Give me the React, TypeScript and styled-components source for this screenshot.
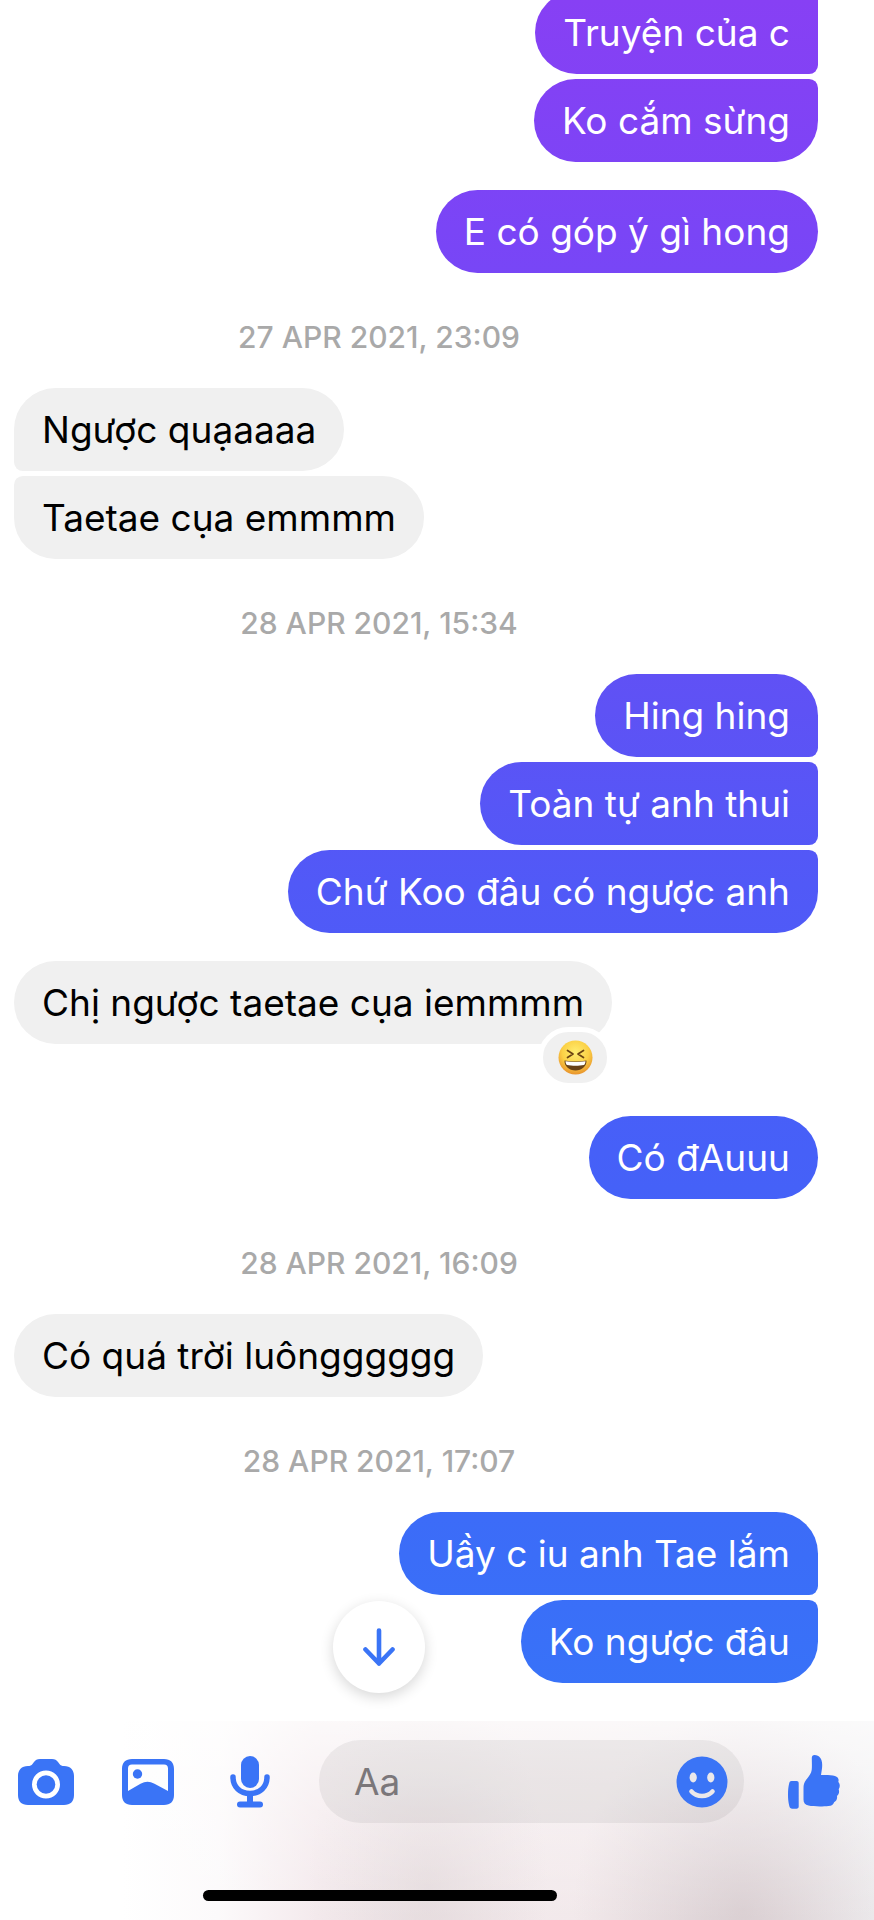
import React from "react";
import styled, { createGlobalStyle, css } from "styled-components";

const accent = "#3a74f6";

const GlobalStyle = createGlobalStyle`
  *, *::before, *::after { box-sizing: border-box; }
  body {
    margin: 0;
    background: #fff;
    color: #000;
    font-family: Inter, "Noto Sans", sans-serif;
  }
`;

const Screen = styled.div`
  display: flex;
  flex-direction: column;
  height: 100vh;
  background: #fff;
`;

const Thread = styled.main`
  flex: 1;
  min-height: 0;
  display: flex;
  flex-direction: column;
  justify-content: flex-end;
  overflow: hidden;
  padding: 0 56px 38px 14px;
`;

const Timestamp = styled.time`
  flex: none;
  display: block;
  padding: 47px 60px 34px 0;
  margin-right: 14px;
  font-size: 30px;
  line-height: 34px;
  font-weight: 500;
  text-align: center;
  text-transform: uppercase;
  color: #a9a9a9;
`;

const Group = styled.section<{ $mine?: boolean; $spaced?: boolean }>`
  flex: none;
  display: flex;
  flex-direction: column;
  align-items: ${(p) => (p.$mine ? "flex-end" : "flex-start")};
  gap: 5px;
  margin-top: ${(p) => (p.$spaced ? "28px" : "0")};
`;

const mineColors = css`
  color: #fff;
  background: linear-gradient(
      180deg,
      #8740f4 0%,
      #7a45f6 12%,
      #5e52f5 37%,
      #5159f7 46%,
      #4660f8 60%,
      #3b6df8 81%,
      #3872f8 88%
    )
    fixed;
`;

const theirColors = css`
  color: #000;
  background: #f0f0f0;
`;

const Bubble = styled.p<{ $mine?: boolean; $joinTop?: boolean; $joinBottom?: boolean }>`
  position: relative;
  margin: 0;
  padding: 18px 28px 17px;
  font-size: 37px;
  line-height: 48px;
  border-radius: 42px;
  ${(p) => (p.$mine ? mineColors : theirColors)}
  ${(p) => p.$joinTop && (p.$mine ? "border-top-right-radius: 9px;" : "border-top-left-radius: 9px;")}
  ${(p) => p.$joinBottom && (p.$mine ? "border-bottom-right-radius: 9px;" : "border-bottom-left-radius: 9px;")}
`;

const ReactedBubble = styled(Bubble)`
  margin-bottom: 44px;
`;

const Reaction = styled.button`
  position: absolute;
  right: 0;
  bottom: -44px;
  display: flex;
  align-items: center;
  justify-content: center;
  width: 74px;
  height: 61px;
  padding: 0;
  border: 5px solid #fff;
  border-radius: 31px;
  background: #f0f0f0;
`;

const Footer = styled.footer`
  position: relative;
  flex: none;
  display: flex;
  flex-direction: column;
  justify-content: space-between;
  padding: 19px 32px 19px 18px;
  height: 199px;
  background:
    linear-gradient(180deg, rgba(255, 255, 255, 0.7) 0%, rgba(255, 255, 255, 0.3) 45%, rgba(255, 255, 255, 0) 100%),
    radial-gradient(170px 200px at 85% 95%, rgba(212, 200, 203, 0.75), rgba(212, 200, 203, 0) 100%),
    radial-gradient(120px 220px at 49% 85%, rgba(222, 212, 214, 0.65), rgba(222, 212, 214, 0) 100%),
    linear-gradient(90deg, #fff 14%, #fcfafb 25%, #f4eaed 36%, #f2e9eb 70%, #ede6e9 85%, #f0eff1 100%);
`;

const ScrollDown = styled.button`
  position: absolute;
  bottom: calc(100% + 28px);
  left: calc(50% - 58px);
  transform: translateX(-50%);
  display: flex;
  align-items: center;
  justify-content: center;
  width: 92px;
  height: 92px;
  padding: 0;
  border: 0;
  border-radius: 50%;
  background: #fff;
  box-shadow: 0 4px 14px rgba(0, 0, 0, 0.16);
`;

const Toolbar = styled.form`
  display: flex;
  align-items: center;
`;

const Tools = styled.div`
  display: flex;
  gap: 46px;
`;

const IconButton = styled.button`
  flex: none;
  display: flex;
  align-items: center;
  justify-content: center;
  width: 56px;
  height: 56px;
  padding: 0;
  border: 0;
  background: none;
  color: ${accent};
`;

const Field = styled.label`
  flex: 1;
  min-width: 0;
  display: flex;
  align-items: center;
  height: 83px;
  margin: 0 42px 0 41px;
  padding: 0 14px 0 35px;
  border-radius: 42px;
  background: rgba(60, 50, 55, 0.07);
`;

const Input = styled.input`
  flex: 1;
  min-width: 0;
  padding: 0;
  border: 0;
  outline: 0;
  background: none;
  font: inherit;
  font-size: 37px;
  line-height: 48px;
  color: #000;
  &::placeholder {
    color: #7b777a;
    opacity: 1;
  }
`;

const HomeIndicator = styled.div`
  align-self: center;
  width: 354px;
  height: 11px;
  margin-right: 100px;
  border-radius: 6px;
  background: #000;
`;

const CameraIcon = () => (
  <svg width="56" height="46" viewBox="0 0 56 46" aria-hidden="true">
    <path
      fill="currentColor"
      fillRule="evenodd"
      d="M22 0h12c3 0 4.500 1 6 3l1.500 2c1 1.500 2.500 2 4.500 2 6.500 0 10 4 10 10v19c0 6.500-3.500 10-10 10H10C3.500 46 0 42.500 0 36V17C0 11 3.500 7 10 7c2 0 3.500-.5 4.500-2L16 3c1.500-2 3-3 6-3Zm6 11.500a14 14 0 1 0 0 28 14 14 0 0 0 0-28Z"
    />
    <circle cx="28" cy="25.500" r="9.300" fill="currentColor" />
  </svg>
);

const PhotoIcon = () => (
  <svg width="52" height="46" viewBox="0 0 52 46" aria-hidden="true">
    <path
      fill="currentColor"
      fillRule="evenodd"
      d="M10 0h32c6.500 0 10 3.500 10 10v26c0 6.500-3.500 10-10 10H10C3.500 46 0 42.500 0 36V10C0 3.500 3.500 0 10 0Zm0 5.500C7.300 5.500 6 6.800 6 9.500V32l12.500-7.200c5-2.800 9-2.800 14 0L46 32V9.500c0-2.700-1.300-4-4-4H10Z"
    />
    <circle cx="15.500" cy="15" r="4.700" fill="currentColor" />
  </svg>
);

const MicIcon = () => (
  <svg width="40" height="52" viewBox="0 0 40 52" aria-hidden="true">
    <rect x="11" y="0" width="18" height="32" rx="9" fill="currentColor" />
    <path d="M3 21c0 10 7 16.500 17 16.500S37 31 37 21" fill="none" stroke="currentColor" strokeWidth="5.500" strokeLinecap="round" />
    <path d="M20 38v9" stroke="currentColor" strokeWidth="6" />
    <rect x="7" y="45.500" width="26" height="6" rx="3" fill="currentColor" />
  </svg>
);

const SmileIcon = () => (
  <svg width="52" height="52" viewBox="0 0 52 52" aria-hidden="true">
    <circle cx="26" cy="26" r="25.500" fill="currentColor" />
    <ellipse cx="17.200" cy="21.500" rx="3.600" ry="4.900" fill="#ebe8ea" />
    <ellipse cx="34.800" cy="21.500" rx="3.600" ry="4.900" fill="#ebe8ea" />
    <path d="M15.500 35.500c5.500 6 15.500 6 21 0" fill="none" stroke="#ebe8ea" strokeWidth="4.600" strokeLinecap="round" />
  </svg>
);

const ThumbIcon = () => (
  <svg width="52" height="54" viewBox="0 0 52 54" aria-hidden="true">
    <path
      fill="currentColor"
      d="M3.500 26h5c1.400 0 2.200.8 2.200 2.200v23.300c0 1.400-.8 2.200-2.200 2.200H4.300c-1.600 0-2.600-.9-3-2.700C.3 47 0 43.500 0 39.500c0-4 .3-7.500 1.200-11.200.4-1.600 1-2.300 2.300-2.300Z"
    />
    <path
      fill="currentColor"
      d="M23.800 3c0-2 1-3 2.700-3 4.800 0 7.700 3.800 7.700 10 0 3.300-.6 6-1.200 10 5.500-.3 10.500 0 14 1 3 .9 4.200 3.200 3.300 6 1.900 2 1.900 5 .4 7.200.9 2.700.2 5.200-1.700 6.800.5 2.800-.6 5-2.900 6.200-.7 2.400-2.500 3.600-5.600 3.900-6 .6-15 .6-20-.5-3.500-.8-5-2.600-5-6V33c0-3.500.6-5.500 2.700-8.300 2.800-3.700 5.100-6 5.500-9.700.4-4 .100-8 .100-12Z"
    />
  </svg>
);

const ArrowDownIcon = () => (
  <svg width="34" height="38" viewBox="0 0 34 38" fill="none" stroke={accent} strokeWidth="4.600" strokeLinecap="round" strokeLinejoin="round" aria-hidden="true">
    <path d="M17 2.500v33M3.500 21.500 17 35.500l13.500-14" />
  </svg>
);

const LaughIcon = () => (
  <svg width="35" height="35" viewBox="0 0 35 35" aria-hidden="true">
    <defs>
      <radialGradient id="laugh-face" cx="50%" cy="35%" r="65%">
        <stop offset="0" stopColor="#ffee70" />
        <stop offset="0.600" stopColor="#fbd045" />
        <stop offset="1" stopColor="#e8932c" />
      </radialGradient>
    </defs>
    <circle cx="17.500" cy="17.500" r="17" fill="url(#laugh-face)" />
    <path d="M9.500 10.500 15 14l-5.500 3.500M25.500 10.500 20 14l5.500 3.500" fill="none" stroke="#6b4312" strokeWidth="1.700" strokeLinecap="round" strokeLinejoin="round" />
    <path d="M6.500 20.500c7 1.200 15 1.200 22 0 .3 5.500-4.500 10-11 10s-11.300-4.500-11-10Z" fill="#694216" />
    <path d="M7.500 21.300c6.500 1 13.500 1 20 0-.1 1.800-.7 3.200-1.500 3.700-5 .9-12 .9-17 0-.8-.5-1.400-1.900-1.500-3.700Z" fill="#fff" />
  </svg>
);

export default function App() {
  return (
    <>
      <GlobalStyle />
      <Screen>
        <Thread>
          <Group $mine>
            <Bubble $mine $joinTop $joinBottom>Truyện của c</Bubble>
            <Bubble $mine $joinTop>Ko cắm sừng</Bubble>
          </Group>
          <Group $mine $spaced>
            <Bubble $mine>E có góp ý gì hong</Bubble>
          </Group>
          <Timestamp dateTime="2021-04-27T23:09">27 Apr 2021, 23:09</Timestamp>
          <Group>
            <Bubble $joinBottom>Ngược quạaaaa</Bubble>
            <Bubble $joinTop>Taetae cụa emmmm</Bubble>
          </Group>
          <Timestamp dateTime="2021-04-28T15:34">28 Apr 2021, 15:34</Timestamp>
          <Group $mine>
            <Bubble $mine $joinBottom>Hing hing</Bubble>
            <Bubble $mine $joinTop $joinBottom>Toàn tự anh thui</Bubble>
            <Bubble $mine $joinTop>Chứ Koo đâu có ngược anh</Bubble>
          </Group>
          <Group $spaced>
            <ReactedBubble>
              Chị ngược taetae cụa iemmmm
              <Reaction type="button" aria-label="Laughing reaction">
                <LaughIcon />
              </Reaction>
            </ReactedBubble>
          </Group>
          <Group $mine $spaced>
            <Bubble $mine>Có đAuuu</Bubble>
          </Group>
          <Timestamp dateTime="2021-04-28T16:09">28 Apr 2021, 16:09</Timestamp>
          <Group>
            <Bubble>Có quá trời luôngggggg</Bubble>
          </Group>
          <Timestamp dateTime="2021-04-28T17:07">28 Apr 2021, 17:07</Timestamp>
          <Group $mine>
            <Bubble $mine $joinBottom>Uầy c iu anh Tae lắm</Bubble>
            <Bubble $mine $joinTop>Ko ngược đâu</Bubble>
          </Group>
        </Thread>
        <Footer>
          <ScrollDown type="button" aria-label="Scroll to latest">
            <ArrowDownIcon />
          </ScrollDown>
          <Toolbar onSubmit={(e) => e.preventDefault()}>
            <Tools>
              <IconButton type="button" aria-label="Camera"><CameraIcon /></IconButton>
              <IconButton type="button" aria-label="Photos"><PhotoIcon /></IconButton>
              <IconButton type="button" aria-label="Voice message"><MicIcon /></IconButton>
            </Tools>
            <Field>
              <Input type="text" placeholder="Aa" aria-label="Message" />
              <IconButton type="button" aria-label="Emoji"><SmileIcon /></IconButton>
            </Field>
            <IconButton type="button" aria-label="Like"><ThumbIcon /></IconButton>
          </Toolbar>
          <HomeIndicator />
        </Footer>
      </Screen>
    </>
  );
}
